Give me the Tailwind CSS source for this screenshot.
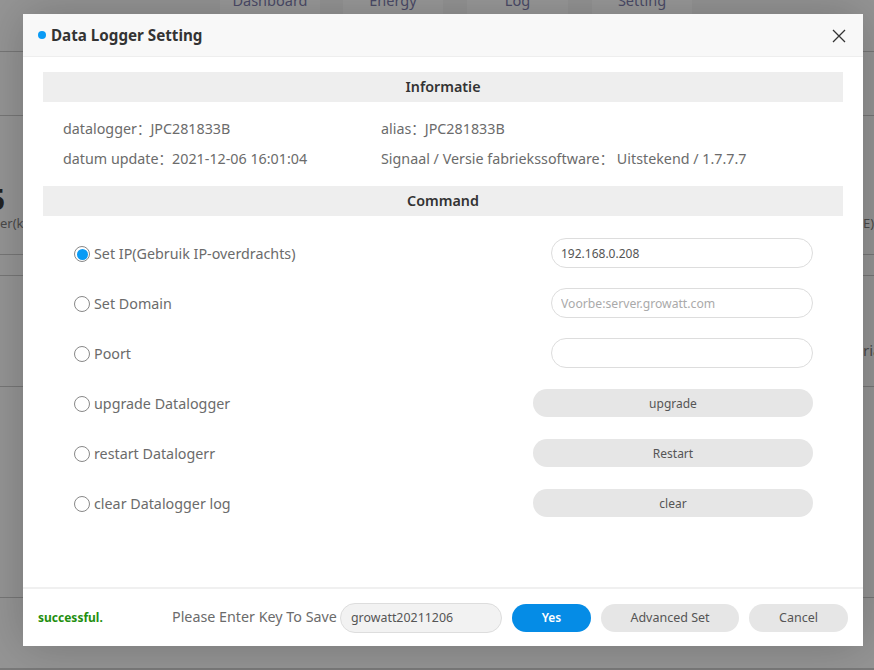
<!DOCTYPE html>
<html>
<head>
<meta charset="utf-8">
<title>Data Logger Setting</title>
<script src="https://cdn.jsdelivr.net/npm/@tailwindcss/browser@4"></script>
</head>
<body class="relative h-[670px] w-[874px] overflow-hidden bg-[#959595] font-['Noto_Sans','Noto_Sans_CJK_SC',sans-serif] text-[#6b6b6b]">
  <!-- page behind the dialog -->
  <div class="absolute inset-0 overflow-hidden text-[#4a4a4a]">
    <div class="absolute left-[220px] top-[-10px] flex h-[30px] text-[14.5px] text-[#4b4b68]">
      <span class="w-[100px] bg-white/5 text-center">Dashboard</span>
      <span class="ml-[23px] w-[100px] bg-white/5 text-center">Energy</span>
      <span class="ml-[24px] w-[101px] bg-white/5 text-center">Log</span>
      <span class="ml-[24px] w-[100px] bg-white/5 text-center">Setting</span>
    </div>
    <div class="absolute left-0 top-[51px] h-px w-full bg-[#777]"></div>
    <div class="absolute left-0 top-[115px] h-px w-full bg-[#777]"></div>
    <div class="absolute left-0 top-[254px] h-px w-full bg-[#777]"></div>
    <div class="absolute left-0 top-[275px] h-px w-full bg-[#777]"></div>
    <div class="absolute left-0 top-[386px] h-px w-full bg-[#777]"></div>
    <div class="absolute left-0 top-[597px] h-px w-full bg-[#777]"></div>
    <span class="absolute left-[-11px] top-[178px] text-[28px] font-bold text-[#222]">5</span>
    <span class="absolute left-0 top-[214px] text-[13px]">er(k</span>
    <span class="absolute left-[863px] top-[214px] text-[13px]">E)</span>
    <span class="absolute left-[863px] top-[339px] text-[15px]">ria</span>
    <div class="absolute left-0 top-[668px] h-[2px] w-full bg-[#7a7a7a]"></div>
  </div>

  <div role="dialog" class="relative top-[14px] ml-[23px] flex h-[632px] w-[840px] flex-col bg-white shadow-[0_0_45px_rgba(0,0,0,0.22)]">
    <header class="flex h-[43px] shrink-0 items-center justify-between border-b border-[#eee] bg-[#f8f8f8] pl-[15px] pr-[17px]">
      <h2 class="flex items-center gap-[5px] text-[15.2px] font-bold text-[#333]">
        <span class="size-2 rounded-full bg-[#0a9bf5]"></span>
        Data Logger Setting
      </h2>
      <button aria-label="Close" class="mt-px text-[#333]">
        <svg width="14" height="14" viewBox="0 0 14 14" fill="none" stroke="currentColor" stroke-width="1.3">
          <path d="M1 1l12 12M13 1L1 13"/>
        </svg>
      </button>
    </header>

    <div class="flex-1 px-5 pt-[15px]">
      <h3 class="flex h-[30px] items-center justify-center bg-[#eee] text-[14.3px] font-semibold text-[#333]">Informatie</h3>
      <div class="grid grid-cols-[318px_1fr] gap-y-[8px] px-5 pt-[16px] text-[14.3px]">
        <p class="leading-[22px]">datalogger<span class="font-['Noto_Sans_CJK_SC'] text-[13.5px] leading-none">：</span>JPC281833B</p>
        <p class="leading-[22px]">alias<span class="font-['Noto_Sans_CJK_SC'] text-[13.5px] leading-none">：</span>JPC281833B</p>
        <p class="leading-[22px]">datum update<span class="font-['Noto_Sans_CJK_SC'] text-[13.5px] leading-none">：</span>2021-12-06 16:01:04</p>
        <p class="leading-[22px]">Signaal / Versie fabriekssoftware<span class="font-['Noto_Sans_CJK_SC'] text-[13.5px] leading-none">：</span>&nbsp;Uitstekend / 1.7.7.7</p>
      </div>
      <h3 class="mt-[16px] flex h-[30px] items-center justify-center bg-[#eee] text-[14.3px] font-semibold text-[#333]">Command</h3>

      <form class="flex flex-col gap-[22px] pl-[31px] pr-[30px] pt-[23px] text-[14.3px]">
        <div class="flex h-[28px] items-center justify-between">
          <label class="flex items-center gap-1 pt-[2px]">
            <span class="flex size-4 items-center justify-center rounded-full border border-[#888]"><span class="size-[11px] rounded-full bg-[#0a9bf5]"></span></span>
            Set IP(Gebruik IP-overdrachts)
          </label>
          <input value="192.168.0.208" class="h-[30px] w-[262px] rounded-full border border-[#ddd] px-[9px] text-xs text-[#555] outline-none">
        </div>
        <div class="flex h-[28px] items-center justify-between">
          <label class="flex items-center gap-1 pt-[2px]">
            <span class="size-4 rounded-full border border-[#888]"></span>
            Set Domain
          </label>
          <input placeholder="Voorbe:server.growatt.com" class="h-[30px] w-[262px] rounded-full border border-[#ddd] px-[9px] text-[12.2px] outline-none placeholder:text-[#aaa]">
        </div>
        <div class="flex h-[28px] items-center justify-between">
          <label class="flex items-center gap-1 pt-[2px]">
            <span class="size-4 rounded-full border border-[#888]"></span>
            Poort
          </label>
          <input class="h-[30px] w-[262px] rounded-full border border-[#ddd] px-[9px] text-xs outline-none">
        </div>
        <div class="flex h-[28px] items-center justify-between">
          <label class="flex items-center gap-1 pt-[2px]">
            <span class="size-4 rounded-full border border-[#888]"></span>
            upgrade Datalogger
          </label>
          <button type="button" class="h-[28px] w-[280px] rounded-full bg-[#e6e6e6] pt-0.5 text-xs text-[#555]">upgrade</button>
        </div>
        <div class="flex h-[28px] items-center justify-between">
          <label class="flex items-center gap-1 pt-[2px]">
            <span class="size-4 rounded-full border border-[#888]"></span>
            restart Datalogerr
          </label>
          <button type="button" class="h-[28px] w-[280px] rounded-full bg-[#e6e6e6] pt-0.5 text-xs text-[#555]">Restart</button>
        </div>
        <div class="flex h-[28px] items-center justify-between">
          <label class="flex items-center gap-1 pt-[2px]">
            <span class="size-4 rounded-full border border-[#888]"></span>
            clear Datalogger log
          </label>
          <button type="button" class="h-[28px] w-[280px] rounded-full bg-[#e6e6e6] pt-0.5 text-xs text-[#555]">clear</button>
        </div>
      </form>
    </div>

    <footer class="flex h-[59px] shrink-0 items-center border-t-2 border-[#f0f0f0] px-[15px]">
      <span class="w-[134px] text-xs font-bold text-[#1f8f0f]">successful.</span>
      <span class="w-[164px] whitespace-nowrap pb-0.5 text-[14.3px]">Please Enter Key To Save</span>
      <input value="growatt20211206" class="ml-[4px] h-[30px] w-[162px] rounded-full border border-[#ddd] bg-[#f2f2f2] px-[10px] text-[12.4px] text-[#555] outline-none">
      <button class="ml-[10px] h-[28px] w-[79px] rounded-full bg-[#058ce6] text-xs font-semibold text-white">Yes</button>
      <button class="ml-[10px] h-[28px] w-[138px] rounded-full bg-[#e6e6e6] pt-0.5 text-[12.5px] text-[#555]">Advanced Set</button>
      <button class="ml-[10px] h-[28px] w-[99px] rounded-full bg-[#e6e6e6] pt-0.5 text-[12.5px] text-[#555]">Cancel</button>
    </footer>
  </div>
</body>
</html>
